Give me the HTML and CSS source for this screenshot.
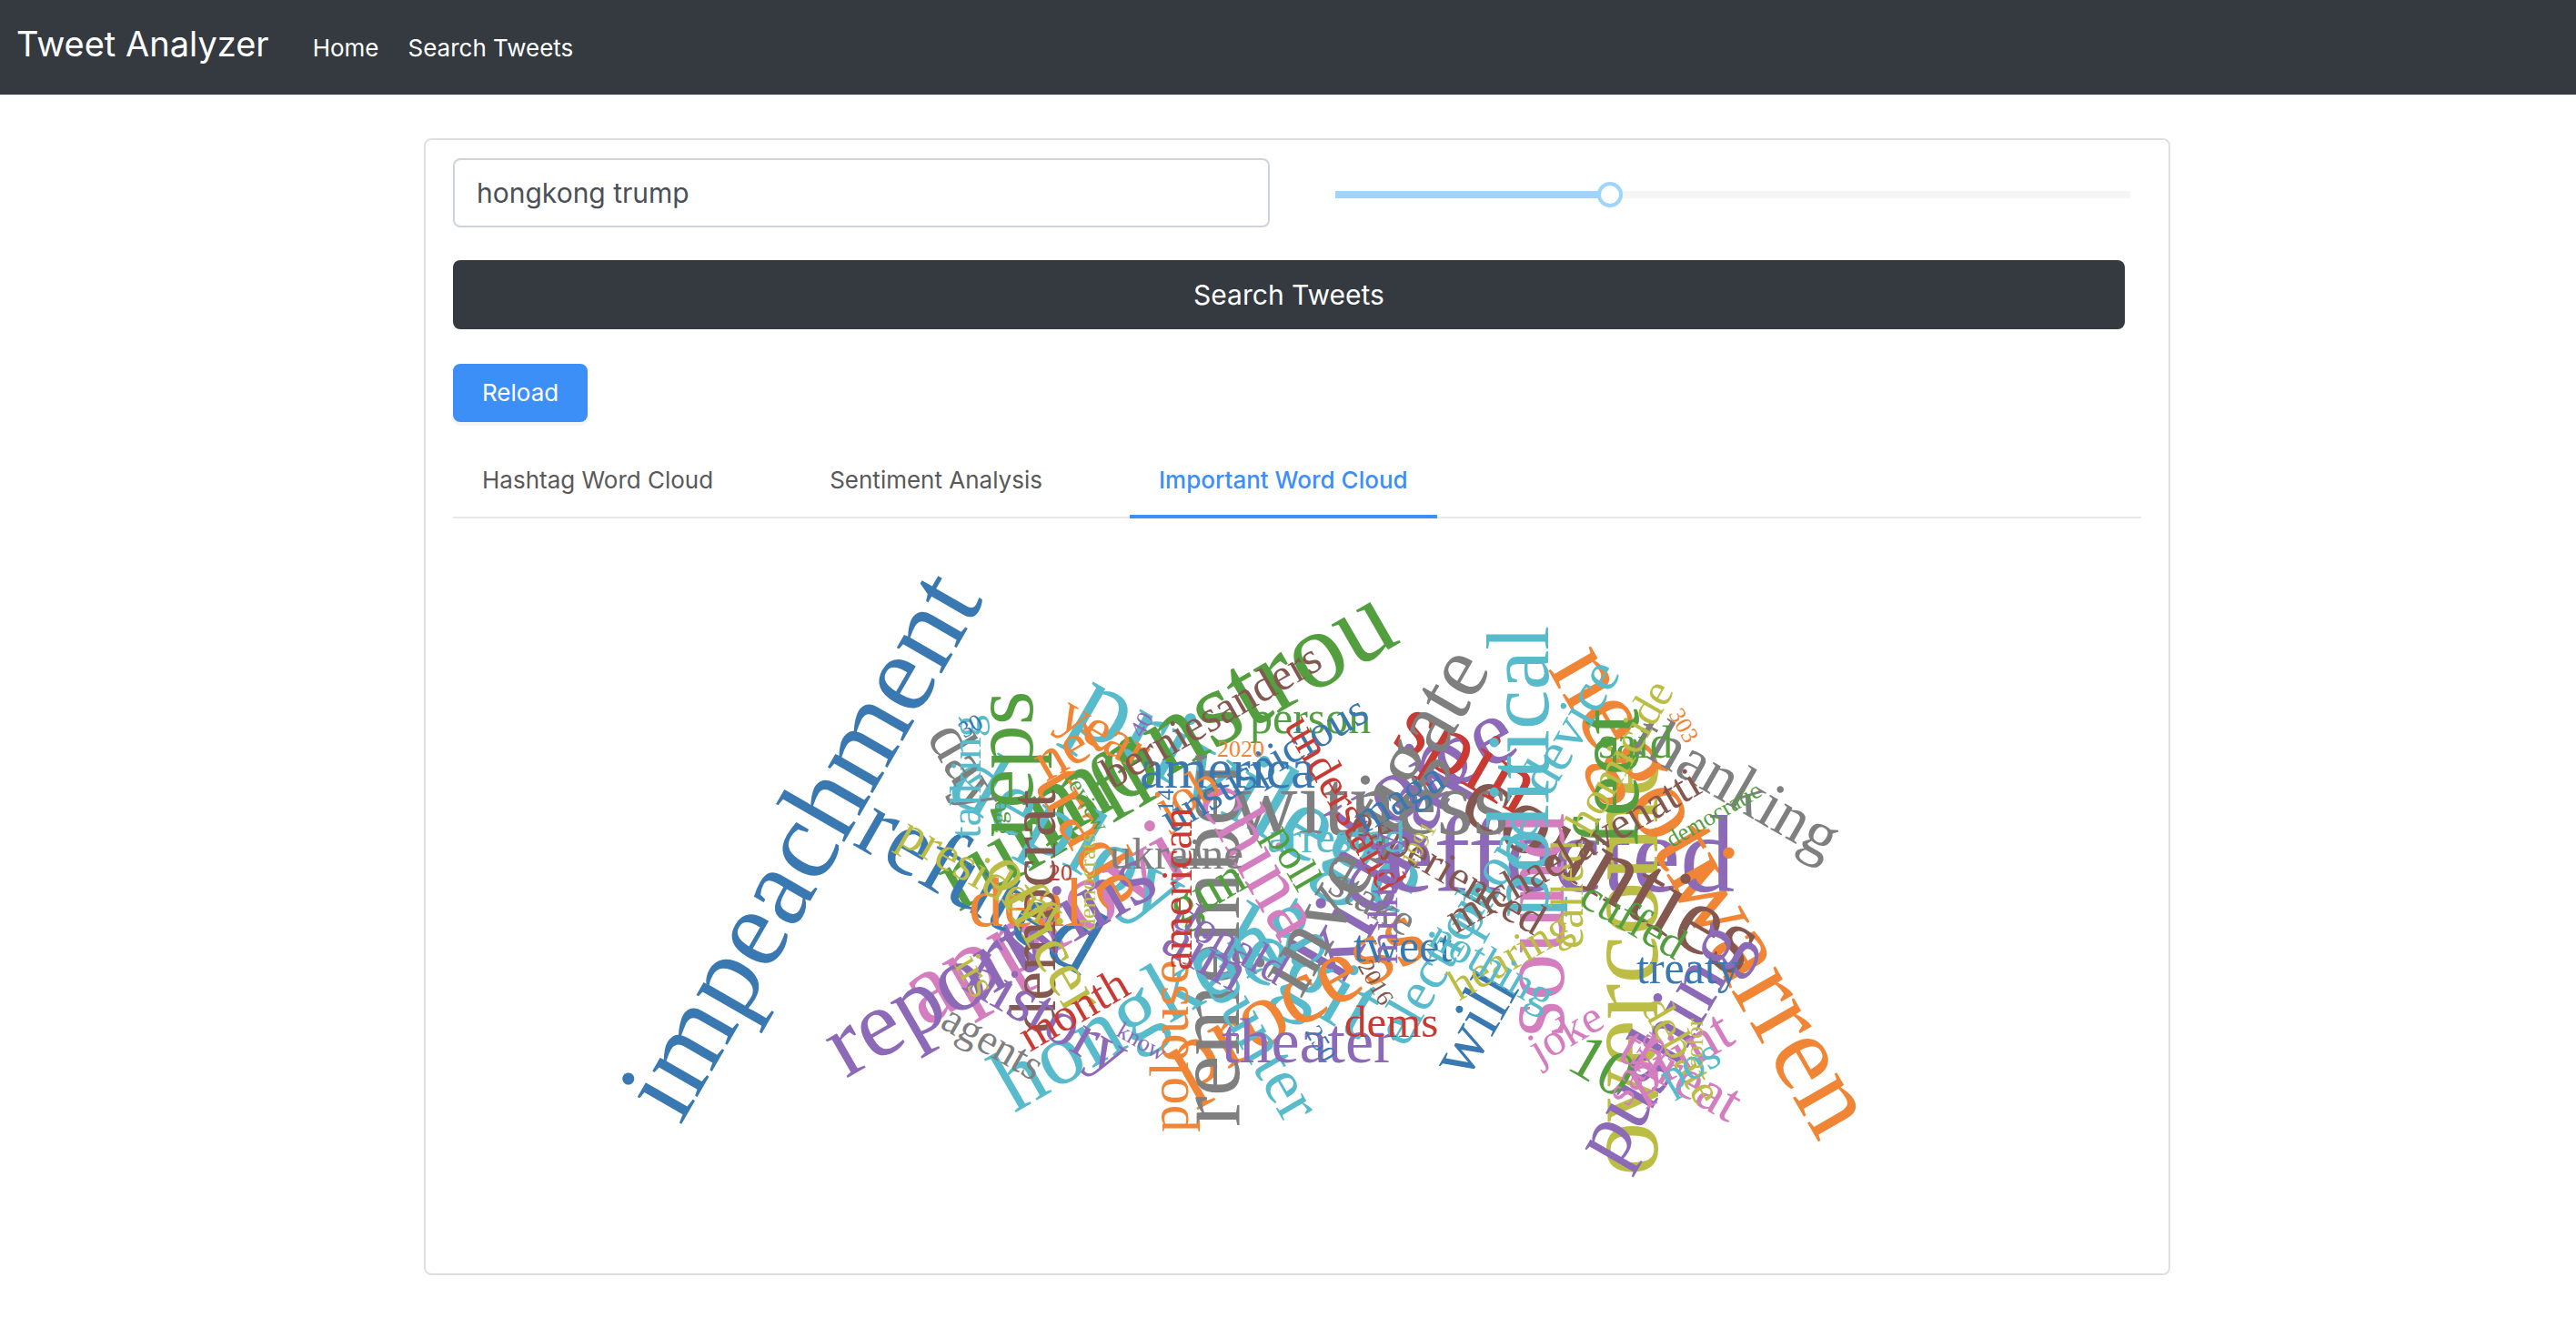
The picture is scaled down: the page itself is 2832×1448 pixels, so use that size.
FILE: index.html
```html
<!DOCTYPE html>
<html lang="en">
<head>
<meta charset="utf-8">
<title>Tweet Analyzer</title>
<link rel="stylesheet" href="styles.css">
</head>
<body>
<nav class="navbar">
  <a class="brand" href="#">Tweet Analyzer</a>
  <a class="nav-link" href="#">Home</a>
  <a class="nav-link" href="#">Search Tweets</a>
</nav>
<main class="page">
  <section class="card">
    <form class="search" onsubmit="return false">
      <input class="query" type="text" value="hongkong trump" aria-label="Search terms">
      <input class="amount" type="range" min="0" max="100" value="34" aria-label="Number of tweets">
      <button class="submit" type="submit">Search Tweets</button>
    </form>
    <button class="reload" type="button">Reload</button>
    <div class="tabs" role="tablist">
      <button class="tab" role="tab" type="button">Hashtag Word Cloud</button>
      <button class="tab" role="tab" type="button">Sentiment Analysis</button>
      <button class="tab active" role="tab" type="button" aria-selected="true">Important Word Cloud</button>
    </div>
    <svg class="cloud" viewBox="498 590 1856 780" role="img" aria-label="Important word cloud">
      <text class="blue" font-size="124" transform="translate(748 1238) rotate(-60)">impeachment</text>
      <text class="orange" font-size="121" transform="translate(1832 966) rotate(60)">warren</text>
      <text class="cyan" font-size="120" transform="translate(1172 796) rotate(30)">privilege</text>
      <text class="purple" font-size="120" transform="translate(1523 980)">effected</text>
      <text class="olive" font-size="119" transform="translate(1822 1293) rotate(-90)">overcome</text>
      <text class="green" font-size="120" transform="translate(1149 932) rotate(-30)">monstrou</text>
      <text class="orange" font-size="117" transform="translate(1701 735) rotate(60)">negoti</text>
      <text class="pink" font-size="112" transform="translate(1016 1130) rotate(-30)">approvi</text>
      <text class="purple" font-size="108" transform="translate(1475 1085) rotate(-60)">kidnap</text>
      <text class="brown" font-size="108" transform="translate(1600 896) rotate(30)">counties</text>
      <text class="green" font-size="105" transform="translate(1054 1003) rotate(-30)">runoff</text>
      <text class="purple" font-size="105" transform="translate(930 1186) rotate(-30)">report</text>
      <text class="cyan" font-size="105" transform="translate(1333 1051) rotate(30)">legit</text>
      <text class="purple" font-size="104" transform="translate(1479 937) rotate(-30)">voice</text>
      <text class="orange" font-size="104" transform="translate(1304 1202) rotate(-30)">process</text>
      <text class="blue" font-size="103" transform="translate(936 928) rotate(30)">refuted</text>
      <text class="cyan" font-size="103" transform="translate(1037 875) rotate(30)">deploy</text>
      <text class="pink" font-size="103" transform="translate(1719 1140) rotate(-90)">sound</text>
      <text class="gray" font-size="102" transform="translate(1353 917)">witness</text>
      <text class="green" font-size="102" transform="translate(1801 932) rotate(-90)">feet</text>
      <text class="gray" font-size="101" transform="translate(1362 1239) rotate(-90)">remember</text>
      <text class="red" font-size="98" transform="translate(1528 816) rotate(30)">spin</text>
      <text class="cyan" font-size="98" transform="translate(1115 1224) rotate(-30)">hongkong</text>
      <text class="cyan" font-size="98" transform="translate(1702 1009) rotate(-90)">political</text>
      <text class="gray" font-size="97" transform="translate(1430 1099) rotate(-60)">investigate</text>
      <text class="green" font-size="97" transform="translate(1135 921) rotate(-90)">reps</text>
      <text class="purple" font-size="96" transform="translate(1120 1071) rotate(-30)">wins</text>
      <text class="purple" font-size="92" transform="translate(1778 1286) rotate(-60)">pushing</text>
      <text class="pink" font-size="86" transform="translate(1315 877) rotate(60)">china</text>
      <text class="orange" font-size="82" transform="translate(1136 862) rotate(60)">trade</text>
      <text class="orange" font-size="76" transform="translate(1065 1018)">deal</text>
      <text class="blue" font-size="76" transform="translate(1612 1189) rotate(-60)">will</text>
      <text class="brown" font-size="72" transform="translate(1160 1136) rotate(-90)">democrat</text>
      <text class="olive" font-size="72" transform="translate(1081 955) rotate(60)">officer</text>
      <text class="cyan" font-size="72" transform="translate(1306 1051) rotate(60)">counter</text>
      <text class="gray" font-size="70" transform="translate(1018 810) rotate(60)">day</text>
      <text class="purple" font-size="70" transform="translate(1056 1086) rotate(30)">history</text>
      <text class="gray" font-size="71" transform="translate(1791 822) rotate(30)">thanking</text>
      <text class="purple" font-size="70" transform="translate(1343 1168)">theater</text>
      <text class="pink" font-size="66" transform="translate(1802 1208) rotate(-30)">print</text>
      <text class="green" font-size="70" transform="translate(1720 1174) rotate(30)">10</text>
      <text class="orange" font-size="64" transform="translate(1150 860) rotate(-30)">net</text>
      <text class="purple" font-size="64" transform="translate(1274 1044) rotate(30)">aim</text>
      <text class="orange" font-size="61" transform="translate(1160 796) rotate(30)">year</text>
      <text class="orange" font-size="61" transform="translate(1306 1245) rotate(-90)">polouse</text>
      <text class="blue" font-size="61" transform="translate(1253 866)">america</text>
      <text class="cyan" font-size="61" transform="translate(1545 1153) rotate(-60)">election</text>
      <text class="cyan" font-size="61" transform="translate(1703 878) rotate(-60)">device</text>
      <text class="cyan" font-size="61" transform="translate(1620 1032) rotate(-60)">phone</text>
      <text class="pink" font-size="63" transform="translate(1776 1163) rotate(30)">threat</text>
      <text class="green" font-size="58" transform="translate(1298 1018) rotate(-30)">gun</text>
      <text class="orange" font-size="56" transform="translate(1283 907) rotate(-30)">job</text>
      <text class="olive" font-size="54" transform="translate(985 926) rotate(30)">president</text>
      <text class="red" font-size="51" transform="translate(1132 1157) rotate(-30)">month</text>
      <text class="green" font-size="51" transform="translate(1757 833)">said</text>
      <text class="green" font-size="50" transform="translate(1374 806)">person</text>
      <text class="blue" font-size="50" transform="translate(1488 1057)">tweet</text>
      <text class="blue" font-size="50" transform="translate(1799 1081)">treaty</text>
      <text class="purple" font-size="50" transform="translate(1286 1016) rotate(30)">donald</text>
      <text class="olive" font-size="50" transform="translate(1740 1043) rotate(-90)">called</text>
      <text class="cyan" font-size="49" transform="translate(1078 922) rotate(-90)">talking</text>
      <text class="blue" font-size="49" transform="translate(1288 917) rotate(-30)">unsuspicious</text>
      <text class="gray" font-size="49" transform="translate(1220 955)">ukraine</text>
      <text class="red" font-size="49" transform="translate(1310 1067) rotate(-90)">american</text>
      <text class="brown" font-size="49" transform="translate(1482 911) rotate(30)">experienced</text>
      <text class="cyan" font-size="48" transform="translate(1393 937)">arrested</text>
      <text class="green" font-size="48" transform="translate(1390 918) rotate(60)">poll</text>
      <text class="red" font-size="49" transform="translate(1411 798) rotate(60)">understand</text>
      <text class="blue" font-size="49" transform="translate(1500 917) rotate(-30)">maga</text>
      <text class="gray" font-size="49" transform="translate(1458 980) rotate(30)">stake</text>
      <text class="red" font-size="49" transform="translate(1478 1140)">dems</text>
      <text class="brown" font-size="49" transform="translate(1739 948) rotate(-30)">avenatti</text>
      <text class="brown" font-size="49" transform="translate(1601 1027) rotate(-30)">michael</text>
      <text class="olive" font-size="49" transform="translate(1604 1101) rotate(-30)">hearing</text>
      <text class="cyan" font-size="49" transform="translate(1568 1038) rotate(30)">nothing</text>
      <text class="pink" font-size="50" transform="translate(1692 1171) rotate(-30)">joke</text>
      <text class="pink" font-size="49" transform="translate(1790 1218) rotate(-60)">says</text>
      <text class="olive" font-size="49" transform="translate(1803 1107) rotate(60)">debate</text>
      <text class="cyan" font-size="49" transform="translate(1836 1202) rotate(-30)">pos</text>
      <text class="green" font-size="49" transform="translate(1734 994) rotate(30)">cuffed</text>
      <text class="brown" font-size="49" transform="translate(1223 868) rotate(-30)">berniesanders</text>
      <text class="olive" font-size="50" transform="translate(1748 921) rotate(-60)">homicide</text>
      <text class="olive" font-size="46" transform="translate(1048 1060) rotate(60)">irs</text>
      <text class="gray" font-size="47" transform="translate(1032 1129) rotate(30)">agents</text>
      <text class="purple" font-size="46" transform="translate(1536 1060) rotate(-90)">military</text>
      <text class="olive" font-size="27" transform="translate(1872 1175) rotate(-90)">color</text>
      <text class="blue" font-size="27" transform="translate(1434 1134) rotate(60)">250</text>
      <text class="blue" font-size="26" transform="translate(1060 812) rotate(-30)">30</text>
      <text class="red" font-size="26" transform="translate(1153 968)">20</text>
      <text class="olive" font-size="26" transform="translate(1204 1023) rotate(-90)">democrats</text>
      <text class="green" font-size="26" transform="translate(1170 855) rotate(60)">review</text>
      <text class="green" font-size="26" transform="translate(1106 917) rotate(-90)">age</text>
      <text class="purple" font-size="26" transform="translate(1256 812) rotate(-60)">40</text>
      <text class="blue" font-size="26" transform="translate(1290 893) rotate(-90)">14</text>
      <text class="orange" font-size="26" transform="translate(1338 832)">2020</text>
      <text class="purple" font-size="26" transform="translate(1226 1138) rotate(30)">know</text>
      <text class="olive" font-size="26" transform="translate(1554 955) rotate(-60)">1991</text>
      <text class="brown" font-size="26" transform="translate(1492 1062) rotate(60)">2016</text>
      <text class="orange" font-size="26" transform="translate(1834 785) rotate(60)">303</text>
      <text class="green" font-size="26" transform="translate(1838 932) rotate(-30)">democratic</text>
    </svg>
  </section>
</main>
</body>
</html>
```
FILE: styles.css
```css
* { box-sizing: border-box; }

body {
  margin: 0;
  background: #fff;
  font-family: Inter, "Liberation Sans", sans-serif;
  font-size: 26px;
  line-height: 44px;
}

button, input { font: inherit; }

.navbar {
  display: flex;
  align-items: baseline;
  gap: 32px;
  height: 104px;
  padding: 26px 18px 0;
  background: #343a40;
}

.navbar a { color: #fff; text-decoration: none; }
.brand { margin-right: 16px; font-size: 38px; }

.page { padding: 48px 0 44px 20px; }

.card {
  width: 96%;
  max-width: 1920px;
  margin: 0 auto;
  padding: 20px 30px 30px;
  border: 2px solid #dfdfdf;
  border-radius: 8px;
}

.search {
  display: grid;
  grid-template-columns: 898fr 874fr;
  gap: 36px 72px;
  margin-right: 12px;
  align-items: center;
}

.query {
  width: 100%;
  height: 76px;
  padding: 0 24px;
  border: 2px solid #ced4da;
  border-radius: 8px;
  color: #495057;
  font-size: 30px;
}

.amount {
  appearance: none;
  width: 100%;
  height: 28px;
  margin: 4px 0 0;
  background: linear-gradient(90deg, #9fd4fd 34%, #f5f5f5 34%) center / 100% 8px no-repeat;
  border-radius: 4px;
}

.amount::-webkit-slider-thumb {
  appearance: none;
  width: 28px;
  height: 28px;
  border: 4px solid #9fd4fd;
  border-radius: 50%;
  background: #fff;
}

.submit {
  grid-column: 1 / -1;
  height: 76px;
  margin-right: 6px;
  border: 0;
  border-radius: 8px;
  background: #343a40;
  color: #fff;
  font-size: 30px;
}

.reload {
  display: block;
  height: 64px;
  margin-top: 38px;
  padding: 0 32px;
  border: 0;
  border-radius: 8px;
  background: #3c8ff7;
  box-shadow: 0 4px 0 #f4f4f4;
  color: #fff;
}

.tabs {
  display: flex;
  gap: 64px;
  margin-top: 14px;
  box-shadow: inset 0 -2px #e8e8e8;
}

.tab {
  height: 92px;
  padding: 12px 32px 0;
  border: 0;
  border-bottom: 4px solid transparent;
  background: none;
  color: #595959;
}

.tab.active {
  border-color: #3c8ff7;
  color: #3c8ff7;
  font-weight: 500;
}

.cloud {
  display: block;
  width: 100%;
  height: auto;
  margin-top: 20px;
  font-family: "Liberation Serif", serif;
}

.blue { fill: #3a78b1; }
.orange { fill: #f08536; }
.green { fill: #539e3f; }
.red { fill: #c83a32; }
.purple { fill: #8d6ab8; }
.brown { fill: #84584e; }
.pink { fill: #d47dbf; }
.gray { fill: #7f7f7f; }
.olive { fill: #bcbd45; }
.cyan { fill: #57bbcc; }
```
